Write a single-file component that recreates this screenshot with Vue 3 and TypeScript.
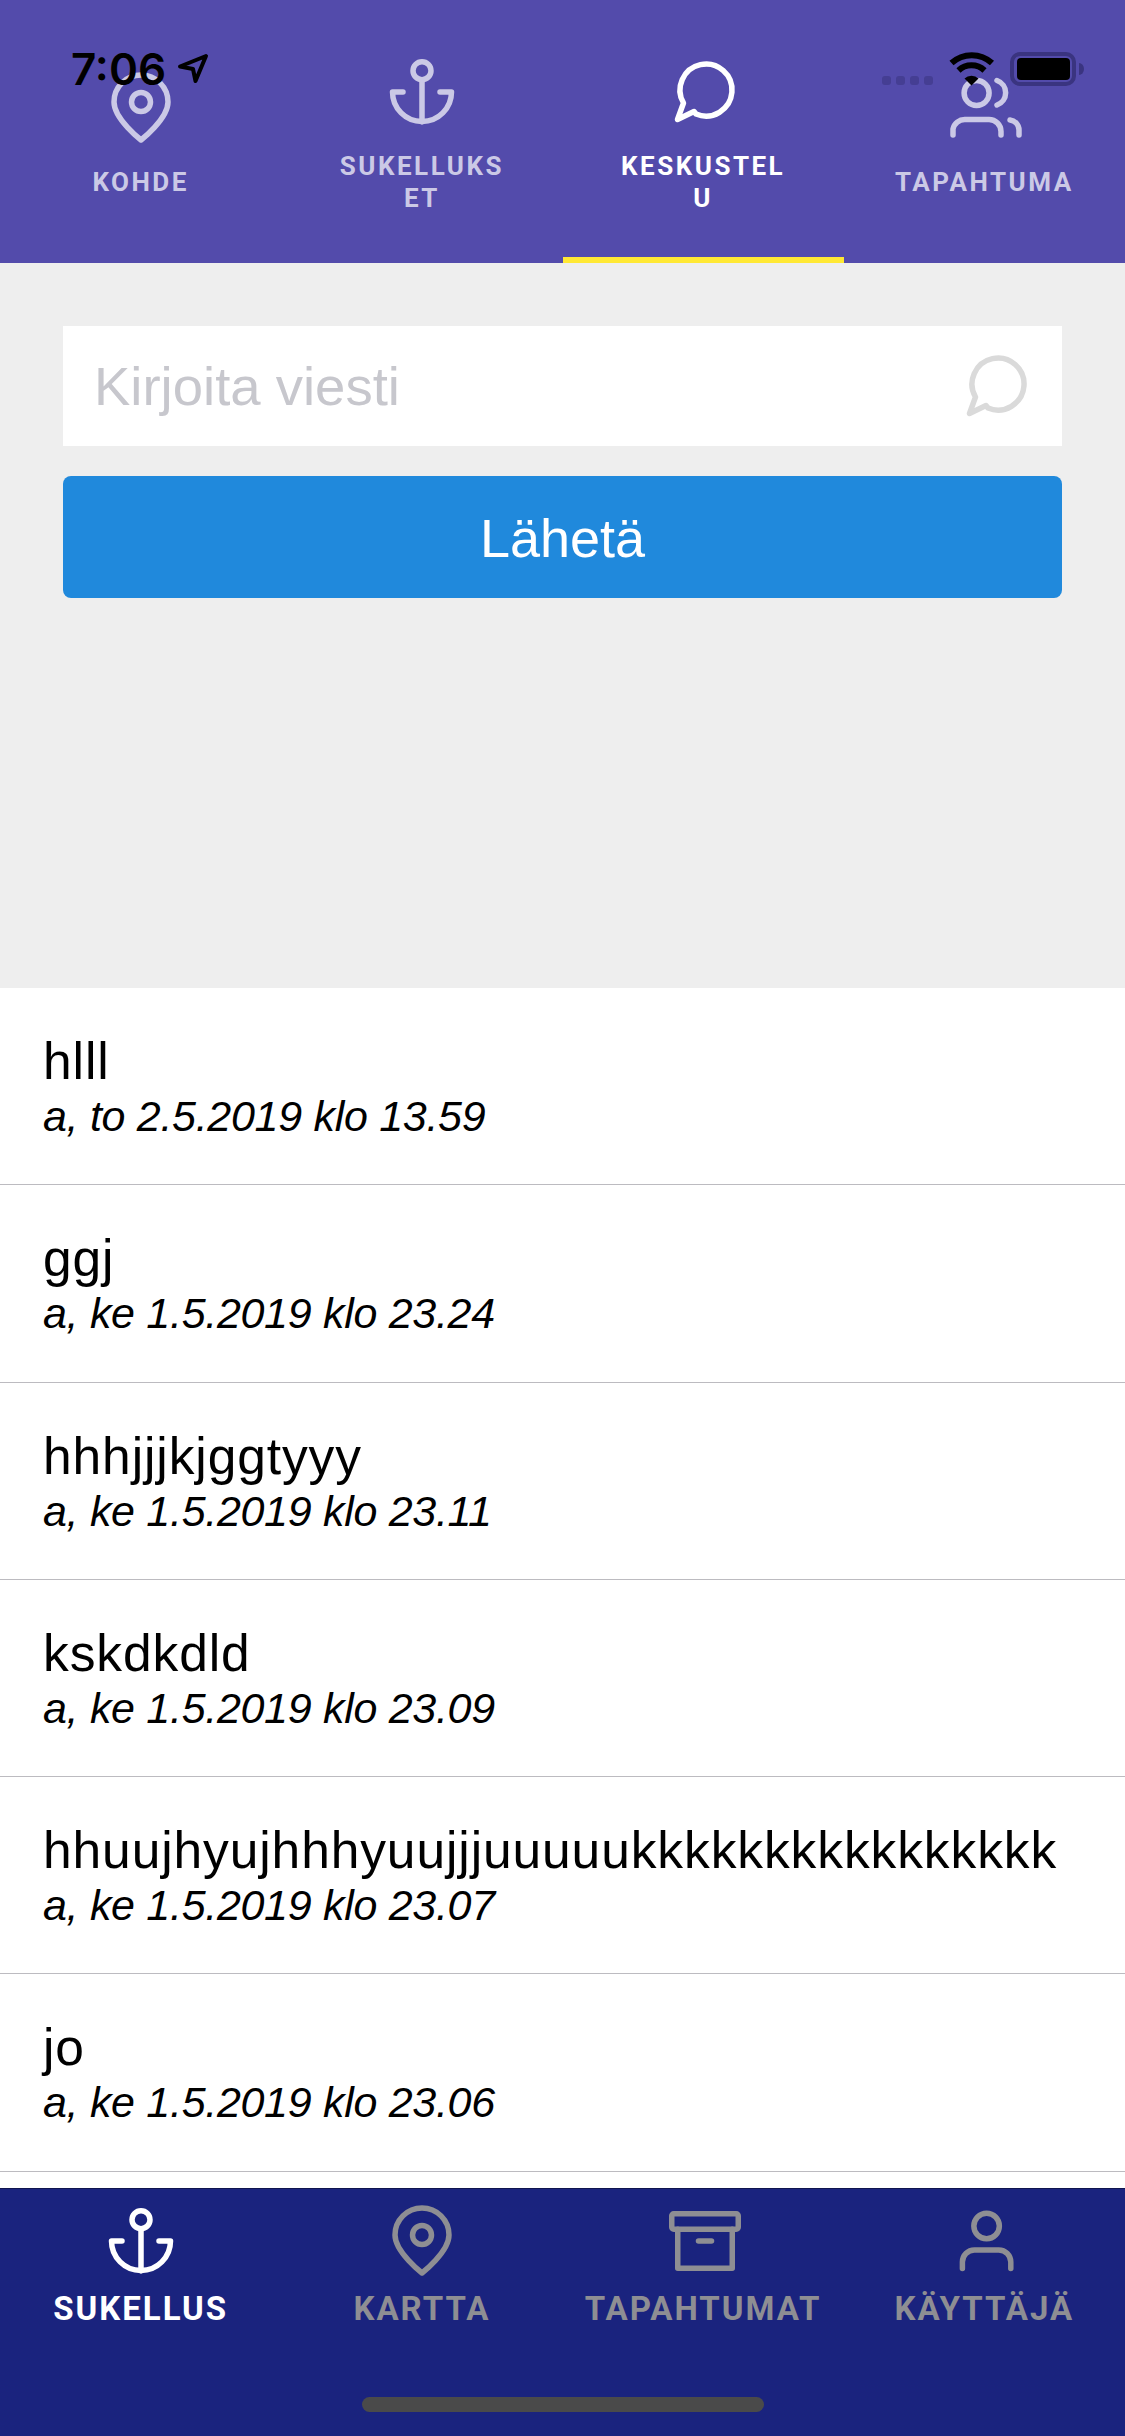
<script setup lang="ts">
import { ref } from 'vue'

interface Message {
  text: string
  meta: string
}

const topTabs = [
  { id: 'pin', label: 'KOHDE' },
  { id: 'anchor', label: 'SUKELLUKSET' },
  { id: 'chat', label: 'KESKUSTELU' },
  { id: 'people', label: 'TAPAHTUMA' },
]

const bottomTabs = [
  { id: 'anchor', label: 'SUKELLUS' },
  { id: 'pin', label: 'KARTTA' },
  { id: 'box', label: 'TAPAHTUMAT' },
  { id: 'user', label: 'KÄYTTÄJÄ' },
]

const activeTop = ref('chat')
const activeBottom = ref('anchor')
const draft = ref('')

const messages: Message[] = [
  { text: 'hlll', meta: 'a, to 2.5.2019 klo 13.59' },
  { text: 'ggj', meta: 'a, ke 1.5.2019 klo 23.24' },
  { text: 'hhhjjjkjggtyyy', meta: 'a, ke 1.5.2019 klo 23.11' },
  { text: 'kskdkdld', meta: 'a, ke 1.5.2019 klo 23.09' },
  { text: 'hhuujhyujhhhyuujjjuuuuukkkkkkkkkkkkkkkk', meta: 'a, ke 1.5.2019 klo 23.07' },
  { text: 'jo', meta: 'a, ke 1.5.2019 klo 23.06' },
]
</script>

<template>
  <div class="screen">
    <nav class="top-tabs">
      <button
        v-for="tab in topTabs"
        :key="tab.id"
        class="top-tab"
        :class="{ active: tab.id === activeTop }"
        @click="activeTop = tab.id"
      >
        <svg class="icon" viewBox="0 0 72 72">
          <template v-if="tab.id === 'pin'">
            <path d="M36 68C36 68 63 47 63 30A27 27 0 0 0 9 30C9 47 36 68 36 68Z" />
            <circle cx="36" cy="30" r="9.5" />
          </template>
          <template v-else-if="tab.id === 'anchor'">
            <circle cx="36" cy="14.7" r="9" />
            <path d="M36 24V66M17 36H6.5A29.5 29.5 0 0 0 65.5 36H54" />
          </template>
          <template v-else-if="tab.id === 'chat'">
            <path d="M10.5 63.5L16.5 47A26 26 0 1 1 29 58L27 55.5Z" />
          </template>
          <template v-else>
            <circle cx="28.6" cy="21" r="12.5" />
            <path d="M49 8.5A13 13 0 0 1 49 33M5 63V57A12 12 0 0 1 17 47.5H41A12 12 0 0 1 53 59.5V63M62 48A10 10 0 0 1 71 58V63" />
          </template>
        </svg>
        <span class="top-label">{{ tab.label }}</span>
      </button>
    </nav>

    <form class="composer" @submit.prevent>
      <label class="field">
        <input v-model="draft" class="field-input" placeholder="Kirjoita viesti" />
        <svg class="icon field-icon" viewBox="0 0 72 72">
          <path d="M10.5 63.5L16.5 47A26 26 0 1 1 29 58L27 55.5Z" />
        </svg>
      </label>
      <button class="send">Lähetä</button>
    </form>

    <ul class="messages">
      <li v-for="msg in messages" :key="msg.meta" class="message">
        <div class="message-text">{{ msg.text }}</div>
        <div class="message-meta">{{ msg.meta }}</div>
      </li>
    </ul>

    <nav class="bottom-tabs">
      <button
        v-for="tab in bottomTabs"
        :key="tab.id"
        class="bottom-tab"
        :class="{ active: tab.id === activeBottom }"
        @click="activeBottom = tab.id"
      >
        <svg class="icon" viewBox="0 0 72 72">
          <template v-if="tab.id === 'anchor'">
            <circle cx="36" cy="14.7" r="9" />
            <path d="M36 24V66M17 36H6.5A29.5 29.5 0 0 0 65.5 36H54" />
          </template>
          <template v-else-if="tab.id === 'pin'">
            <path d="M36 68C36 68 63 47 63 30A27 27 0 0 0 9 30C9 47 36 68 36 68Z" />
            <circle cx="36" cy="30" r="9.5" />
          </template>
          <template v-else-if="tab.id === 'box'">
            <rect x="4.75" y="8.75" width="66.5" height="15.5" rx="2" />
            <path d="M10.75 24.25V63.25H65.25V24.25" stroke-linejoin="round" />
            <path d="M31.5 36H44.5" />
          </template>
          <template v-else>
            <circle cx="38.6" cy="21" r="12.75" />
            <path d="M14.4 63.5V57A12 12 0 0 1 26.4 45H50.8A12 12 0 0 1 62.8 57V63.5" />
          </template>
        </svg>
        <span class="bottom-label">{{ tab.label }}</span>
      </button>
      <div class="home-bar"></div>
    </nav>

    <!-- iOS status bar lies over the app's own header -->
    <div class="status">
      <span class="clock">7:06</span>
      <svg class="status-svg" viewBox="0 0 1125 100">
        <path class="arrow" d="M206 56L180 66.5L193 69L195.5 81Z" />
        <rect v-for="i in 4" :key="i" class="dot" :x="868 + i * 14" y="76" width="9" height="9" rx="3" />
        <path class="wifi" d="M951.5 63A30 30 0 0 1 992 63M958.5 70.5A19 19 0 0 1 984.5 70.5" />
        <path class="wifi-tip" d="M964.5 78.5A10 10 0 0 1 978.5 78.5L971.5 85.5Z" />
        <rect class="batt-frame" x="1012" y="54" width="62" height="30" rx="8" />
        <rect class="batt-fill" x="1017" y="58" width="53" height="22" rx="4" />
        <path class="batt-cap" d="M1079 63A5 6 0 0 1 1079 75Z" />
      </svg>
    </div>
  </div>
</template>

<style scoped>
.screen {
  position: relative;
  width: 1125px;
  height: 2436px;
  display: flex;
  flex-direction: column;
  overflow: hidden;
  background: #fff;
  font-family: "Liberation Sans", Arial, sans-serif;
}

button {
  border: 0;
  padding: 0;
  background: none;
  font-family: inherit;
  cursor: pointer;
}

.icon {
  display: block;
  width: 72px;
  height: 72px;
  flex: none;
  overflow: visible;
  fill: none;
  stroke: currentColor;
  stroke-width: 5.5;
  stroke-linecap: round;
  stroke-linejoin: round;
}

.top-tabs {
  height: 263px;
  flex: none;
  display: flex;
  background: #534bab;
}

.top-tab {
  position: relative;
  flex: 1 1 0;
  padding-top: 7px;
  display: flex;
  flex-direction: column;
  align-items: center;
  justify-content: center;
  color: #cbc9e6;
}

.top-tab.active {
  color: #fff;
}

.top-tab.active::after {
  content: "";
  position: absolute;
  left: 0;
  right: 0;
  bottom: 0;
  height: 6px;
  background: #ffe834;
}

.top-label {
  width: 180px;
  margin-top: 22px;
  font-family: Roboto, sans-serif;
  font-size: 26px;
  font-weight: 700;
  line-height: 32px;
  letter-spacing: 2.5px;
  text-align: center;
  word-break: break-all;
}

.composer {
  height: 725px;
  flex: none;
  box-sizing: border-box;
  padding: 63px 63px 0;
  display: flex;
  flex-direction: column;
  gap: 30px;
  background: #eee;
}

.field {
  height: 120px;
  display: flex;
  align-items: center;
  background: #fff;
}

.field-input {
  flex: 1;
  min-width: 0;
  height: 100%;
  box-sizing: border-box;
  padding: 0 0 0 31px;
  border: 0;
  outline: 0;
  background: none;
  font-family: inherit;
  font-size: 54.5px;
  color: #000;
}

.field-input::placeholder {
  color: #c7c7cd;
  opacity: 1;
}

.field-icon {
  margin-right: 31px;
  color: #dadada;
}

.send {
  height: 122px;
  padding-top: 2px;
  border-radius: 8px;
  background: #2089dc;
  color: #fff;
  font-size: 54px;
}

.messages {
  flex: 1;
  min-height: 0;
  margin: 0;
  padding: 0;
  list-style: none;
  overflow: hidden;
}

.message {
  height: 197.3px;
  box-sizing: border-box;
  padding: 44px 0 0 43px;
  border-bottom: 1px solid #bcbbc0;
  color: #000;
  white-space: nowrap;
}

.message-text {
  font-size: 51.5px;
  line-height: 58px;
  letter-spacing: 0.9px;
}

.message-meta {
  font-size: 43px;
  font-style: italic;
  line-height: 52px;
  letter-spacing: -0.3px;
}

.bottom-tabs {
  position: relative;
  height: 248px;
  flex: none;
  box-sizing: border-box;
  padding-top: 16px;
  display: flex;
  align-items: flex-start;
  background: #1a237e;
  border-top: 1px solid #10154f;
}

.bottom-tab {
  flex: 1 1 0;
  display: flex;
  flex-direction: column;
  align-items: center;
  color: #8e8e93;
}

.bottom-tab.active {
  color: #fff;
}

.bottom-label {
  margin-top: 14px;
  font-family: Roboto, sans-serif;
  font-size: 33px;
  font-weight: 700;
  line-height: 36px;
  letter-spacing: 2px;
}

.home-bar {
  position: absolute;
  left: 362px;
  bottom: 24px;
  width: 402px;
  height: 15px;
  border-radius: 8px;
  background: #4a4a4a;
}

.status {
  position: absolute;
  inset: 0 0 auto;
  height: 100px;
  pointer-events: none;
}

.clock {
  position: absolute;
  left: 71px;
  top: 44px;
  font-family: Inter, sans-serif;
  font-size: 44px;
  font-weight: 600;
  line-height: 50px;
  color: #000;
}

.status-svg {
  display: block;
  width: 1125px;
  height: 100px;
}

.arrow {
  fill: none;
  stroke: #000;
  stroke-width: 4;
  stroke-linejoin: round;
}

.dot {
  fill: #453e93;
}

.wifi {
  fill: none;
  stroke: #000;
  stroke-width: 6;
}

.wifi-tip {
  fill: #000;
}

.batt-frame {
  fill: none;
  stroke: #3a3480;
  stroke-width: 4;
}

.batt-fill {
  fill: #000;
}

.batt-cap {
  fill: #3a3480;
}
</style>
